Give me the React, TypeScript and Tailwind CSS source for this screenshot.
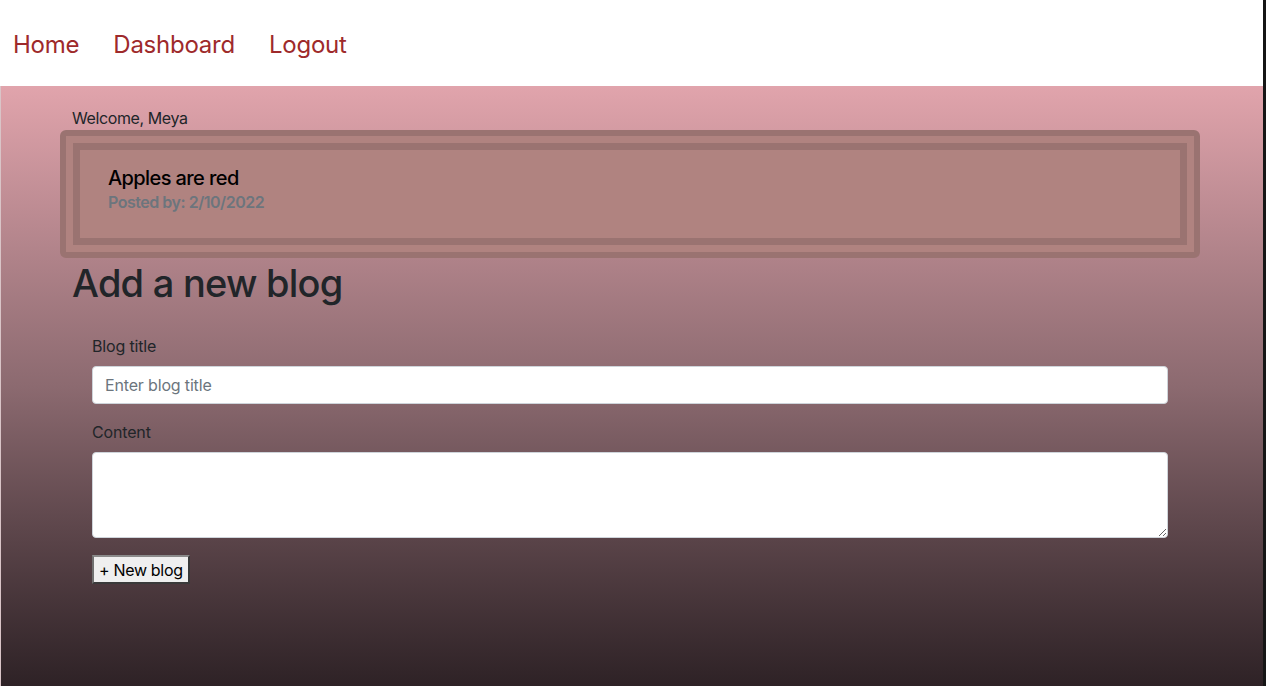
import { useState } from 'react';

const font = { fontFamily: 'Inter, "Noto Sans", sans-serif' };

export default function App() {
  const [title, setTitle] = useState('');
  const [content, setContent] = useState('');

  return (
    <div className="flex h-[686px] w-full overflow-hidden" style={font}>
      <div className="flex flex-1 flex-col">
        {/* Top nav */}
        <nav className="flex h-[86px] items-center gap-[34px] bg-white px-[13px] pt-[4px]">
          {['Home', 'Dashboard', 'Logout'].map(link => (
            <a key={link} href="#" className="text-[24px] leading-none tracking-[-0.01em] text-[#9e2a2b]">
              {link}
            </a>
          ))}
        </nav>

        {/* Gradient body */}
        <div className="flex-1 border-l border-[#d9c4c7] bg-gradient-to-b from-[#e1a4ac] via-[#8c6a70] to-[#2e2226]">
          <div className="w-[1116px] pt-[22px] ml-[71px]">
            <p className="text-[16px] leading-[20px] tracking-[-0.025em] text-[#212529]">Welcome, Meya</p>

            <div className="-mx-[12px] mt-[2px] rounded-md border-[6px] border-[#9a7371] bg-[#b08380] p-[7px]">
              <div className="border-[7px] border-[#9a7371] bg-[#b08380] px-[28px] pt-[16px] pb-[24px]">
                <h5 className="text-[20px] font-medium leading-[24px] tracking-[-0.03em] text-black">Apples are red</h5>
                <p className="text-[16px] font-semibold leading-[24px] tracking-[-0.03em] text-[#6c757d]">Posted by: 2/10/2022</p>
              </div>
            </div>

            <h1 className="mt-[1px] text-[38px] font-medium leading-[48px] tracking-[-0.02em] text-[#212529]">Add a new blog</h1>

            <form className="mt-[27px] px-[20px]" onSubmit={e => e.preventDefault()}>
              <label className="block text-[16px] leading-[24px] tracking-[-0.01em] text-[#212529]">Blog title</label>
              <input
                type="text"
                value={title}
                onChange={e => setTitle(e.target.value)}
                placeholder="Enter blog title"
                className="mt-[8px] block h-[38px] w-full rounded-[4px] border border-[#ced4da] bg-white px-[12px] text-[16px] tracking-[-0.01em] text-[#212529] placeholder-[#6c757d] outline-none"
              />

              <label className="mt-[16px] block text-[16px] leading-[24px] tracking-[-0.01em] text-[#212529]">Content</label>
              <textarea
                value={content}
                onChange={e => setContent(e.target.value)}
                className="mt-[8px] block h-[86px] w-full rounded-[4px] border border-[#ced4da] bg-white px-[12px] py-[6px] text-[16px] outline-none"
              />

              <button
                type="submit"
                className="mt-[17px] h-[29px] border-2 border-t-[#8a8a8a] border-l-[#707070] border-r-[#3a3a3a] border-b-[#3a3a3a] bg-[#efefef] px-[5px] text-[16px] leading-none tracking-[-0.02em] text-black"
              >
                + New blog
              </button>
            </form>
          </div>
        </div>
      </div>

      {/* Edge of window behind */}
      <div className="w-[3px] bg-[#161616]" />
    </div>
  );
}
